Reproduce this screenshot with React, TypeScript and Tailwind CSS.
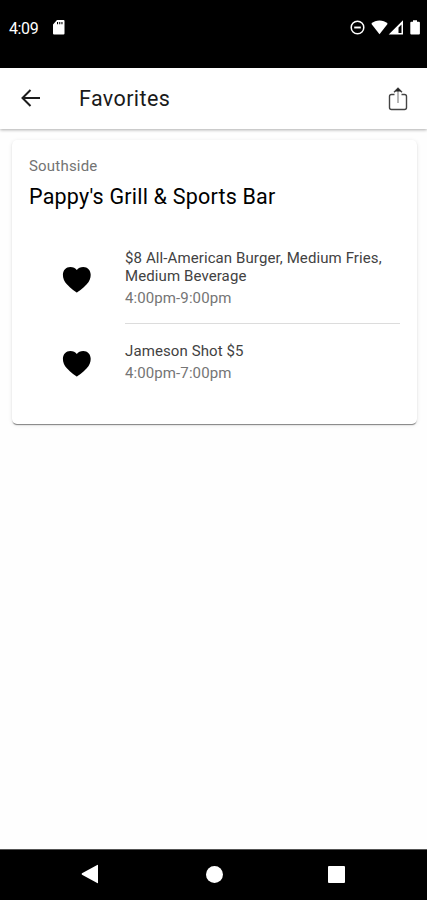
type Deal = { title: string; hours: string }

const deals: Deal[] = [
  { title: '$8 All-American Burger, Medium Fries, Medium Beverage', hours: '4:00pm-9:00pm' },
  { title: 'Jameson Shot $5', hours: '4:00pm-7:00pm' },
]

function StatusBar() {
  return (
    <div className="flex h-[67.5px] shrink-0 items-start bg-black pt-[19px] text-white">
      <span className="ml-[9px] w-[44px] pt-px text-[16px] leading-[18px] tracking-[-0.4px]">4:09</span>
      <svg className="mt-px h-[15px] w-[12px]" viewBox="0 0 12 15" fill="currentColor">
        <path fillRule="evenodd" d="M4 0h6.5Q11.5 0 11.5 1v12.500q0 1-1 1h-9.500q-1 0-1-1V4.500zM4 2v2.200h1.100V2zm2.200 0v2.200h1.100V2zm2.200 0v2.200h1.100V2z" />
      </svg>
      <div className="ml-auto flex pr-[6px]">
        <svg className="mt-px h-[15px] w-[15px]" viewBox="0 0 15 15" fill="none" stroke="currentColor">
          <circle cx="7.500" cy="7.500" r="6.300" strokeWidth="1.500" />
          <path d="M4.200 7.500h6.600" strokeWidth="1.900" />
        </svg>
        <svg className="mt-px ml-[6px] h-[15px] w-[17px]" viewBox="0 0 17 15" fill="currentColor">
          <path d="M8.500 14.300.3 3.700C2.600 1.600 5.400.5 8.500.5s5.900 1.100 8.200 3.200z" />
        </svg>
        <svg className="mt-px h-[15px] w-[16px]" viewBox="0 0 16 15" fill="currentColor">
          <path fillRule="evenodd" d="M15 .3v14.200H.7zM13.500 4.500 10.500 7.500v5.600h3z" />
        </svg>
        <svg className="mt-px ml-[6px] h-[15px] w-[11px]" viewBox="0 0 11 15" fill="currentColor">
          <path d="M3 .2h4v1.500h1.900q1 0 1 1v10.800q0 1-1 1H1.300q-1 0-1-1V2.700q0-1 1-1H3z" />
        </svg>
      </div>
    </div>
  )
}

function Header() {
  return (
    <header className="flex h-[61px] shrink-0 items-center bg-white shadow-[0_1px_3px_0px_rgba(0,0,0,0.32)]">
      <svg className="ml-[20px] h-[20px] w-[22px]" viewBox="0 0 22 20" fill="none" stroke="#1c1c1c" strokeWidth="2">
        <path d="M20 10H2.500M10.500 2l-8 8 8 8" />
      </svg>
      <h1 className="ml-[37px] pt-px text-[21.500px] leading-[28px] tracking-[0.4px] text-[#1a1a1a]">Favorites</h1>
      <svg className="mt-px mr-[19.500px] ml-auto h-[24px] w-[20px]" viewBox="0 0 20 24" fill="none" stroke="#444" strokeWidth="1.400">
        <path d="M6.500 7.500h-3Q1.500 7.500 1.500 9.500v11q0 2 2 2h13q2 0 2-2v-11q0-2-2-2h-3" />
        <path d="M10 16V3" stroke="#999" />
        <path d="M6 5.200 10 1.300l4 3.900" />
        <path d="M7 4.500 10 1.300 13 4.500z" fill="#222" stroke="none" />
      </svg>
    </header>
  )
}

function Heart() {
  return (
    <svg className="mt-[3px] h-[27px] w-[29px]" viewBox="0 0 29 27" fill="#000">
      <path d="M14.800 26.500C13.800 26.300 8.300 22 5.100 18.600 2.100 15.400.9 12.200.9 8.700.9 4.100 4.100.9 8.300.9c2.800 0 5.200 1.100 6.500 3.100C16.100 2 18.500.9 21.300.9c4.200 0 7.400 3.200 7.400 7.800 0 3.500-1.200 6.700-4.200 9.900C21.300 22 15.800 26.300 14.800 26.500z" />
    </svg>
  )
}

function DealRow({ deal, last }: { deal: Deal; last: boolean }) {
  return (
    <li className="flex items-stretch">
      <div className="flex w-[113px] items-center pl-[50px]">
        <Heart />
      </div>
      <div className={`mr-[17px] flex-1 ${last ? 'pt-[18px] pb-[17px]' : 'border-b border-[#dcdcdc] pt-[17px] pb-[16px]'}`}>
        <h3 className="text-[15px] leading-[18px] tracking-[0.1px] text-[#424242]">{deal.title}</h3>
        <p className="mt-[4px] text-[15px] leading-[18px] tracking-[0.1px] text-[#757575]">{deal.hours}</p>
      </div>
    </li>
  )
}

function NavBar() {
  return (
    <nav className="flex h-[51px] shrink-0 items-center border-t border-[#555] bg-black pb-[2px] pl-[81px] text-white">
      <svg className="h-[20px] w-[18px]" viewBox="0 0 18 20" fill="currentColor">
        <path d="M17 1.300v17.400q0 .8-.8.400L1 10.700q-.8-.7 0-1.400L16.200.9q.8-.4.800.4z" />
      </svg>
      <div className="ml-[107px] size-[17px] rounded-full bg-white" />
      <div className="ml-[105px] size-[17px] rounded-[1px] bg-white" />
    </nav>
  )
}

export default function App() {
  return (
    <div className="flex h-[900px] w-[427px] flex-col overflow-hidden bg-[#fefefe] font-[Roboto,sans-serif]">
      <StatusBar />
      <Header />
      <main className="flex-1 pt-[11px] pr-[10px] pl-[12px]">
        <section className="h-[284px] rounded-[5px] bg-white pt-[17px] shadow-[0_2px_1px_-1px_rgba(0,0,0,0.35),0_1px_1px_rgba(0,0,0,0.16),0_1px_4px_rgba(0,0,0,0.10)]">
          <p className="pl-[17px] text-[15px] leading-[18px] tracking-[0.2px] text-[#737373]">Southside</p>
          <h2 className="mt-[9.500px] pl-[17px] text-[21.500px] leading-[26px] tracking-[0.2px] text-black">Pappy's Grill &amp; Sports Bar</h2>
          <ul className="mt-[22px]">
            {deals.map((deal, i) => (
              <DealRow key={deal.title} deal={deal} last={i === deals.length - 1} />
            ))}
          </ul>
        </section>
      </main>
      <NavBar />
    </div>
  )
}
